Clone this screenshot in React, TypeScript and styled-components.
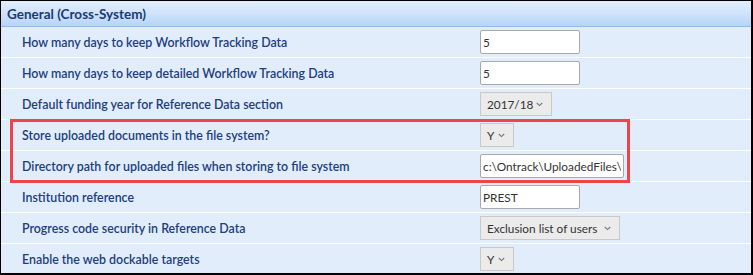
import React from 'react'
import styled, { createGlobalStyle } from 'styled-components'

const GlobalStyle = createGlobalStyle`
  html, body {
    margin: 0;
    padding: 0;
    background: #ffffff;
  }
  body {
    font-family: Lato, "Open Sans", sans-serif;
  }
`

const Panel = styled.div`
  width: 753px;
  height: 275px;
  box-sizing: border-box;
  border-style: solid;
  border-color: #000;
  border-width: 1px 2px 2px 1px;
  background: #e2edfc;
  overflow: hidden;
`

const Header = styled.div`
  height: 25px;
  display: flex;
  align-items: center;
  padding-left: 6px;
  background: linear-gradient(to bottom, #e2eefd 0%, #cfe3fb 50%, #b5d4f8 100%);
  border-bottom: 1px solid #93bbe8;
  font-size: 13.5px;
  font-weight: 700;
  color: #1c3a70;
`

const Row = styled.div<{ $last?: boolean }>`
  display: grid;
  grid-template-columns: 479px 1fr;
  align-items: center;
  height: 30px;
  border-bottom: ${({ $last }) => ($last ? 'none' : '1px solid #ffffff')};
`

const Label = styled.div`
  padding-left: 21px;
  font-size: 12.4px;
  font-weight: 600;
  color: #213d7c;
  white-space: nowrap;
`

const Highlight = styled.div`
  position: relative;

  &::after {
    content: '';
    position: absolute;
    top: -1px;
    left: 9px;
    width: 620px;
    height: 64px;
    box-sizing: border-box;
    border: 3px solid #f0434a;
    pointer-events: none;
  }
`

const TextBox = styled.input<{ $width: number }>`
  width: ${({ $width }) => $width}px;
  height: 24px;
  box-sizing: border-box;
  border: 1px solid #a9a9a9;
  border-radius: 2px;
  background: #fff;
  padding: 0 2px;
  font-family: Lato, "Open Sans", sans-serif;
  font-size: 11.8px;
  color: #333;
  outline: none;
`

const Select = styled.div<{ $width: number }>`
  width: ${({ $width }) => $width}px;
  height: 24px;
  box-sizing: border-box;
  display: flex;
  align-items: center;
  justify-content: space-between;
  padding: 0 8px 0 6px;
  border: 1px solid #c9c9c9;
  background: #ebebeb;
  font-size: 11.8px;
  color: #333;
  white-space: nowrap;
`

const Chevron = () => (
  <svg width="7" height="5" viewBox="0 0 7 5">
    <path d="M0.8 1 L3.5 3.6 L6.2 1" fill="none" stroke="#777" strokeWidth="1.1" />
  </svg>
)

const App = () => (
  <>
    <GlobalStyle />
    <Panel>
      <Header>General (Cross-System)</Header>
      <Row>
        <Label>How many days to keep Workflow Tracking Data</Label>
        <TextBox $width={100} defaultValue="5" />
      </Row>
      <Row>
        <Label>How many days to keep detailed Workflow Tracking Data</Label>
        <TextBox $width={100} defaultValue="5" />
      </Row>
      <Row>
        <Label>Default funding year for Reference Data section</Label>
        <Select $width={72}>
          2017/18
          <Chevron />
        </Select>
      </Row>
      <Highlight>
        <Row>
          <Label>Store uploaded documents in the file system?</Label>
          <Select $width={34}>
            Y
            <Chevron />
          </Select>
        </Row>
        <Row>
          <Label>Directory path for uploaded files when storing to file system</Label>
          <TextBox $width={144} defaultValue="c:\Ontrack\UploadedFiles\" />
        </Row>
      </Highlight>
      <Row>
        <Label>Institution reference</Label>
        <TextBox $width={100} defaultValue="PREST" />
      </Row>
      <Row>
        <Label>Progress code security in Reference Data</Label>
        <Select $width={140}>
          Exclusion list of users
          <Chevron />
        </Select>
      </Row>
      <Row $last>
        <Label>Enable the web dockable targets</Label>
        <Select $width={34}>
          Y
          <Chevron />
        </Select>
      </Row>
    </Panel>
  </>
)

export default App
